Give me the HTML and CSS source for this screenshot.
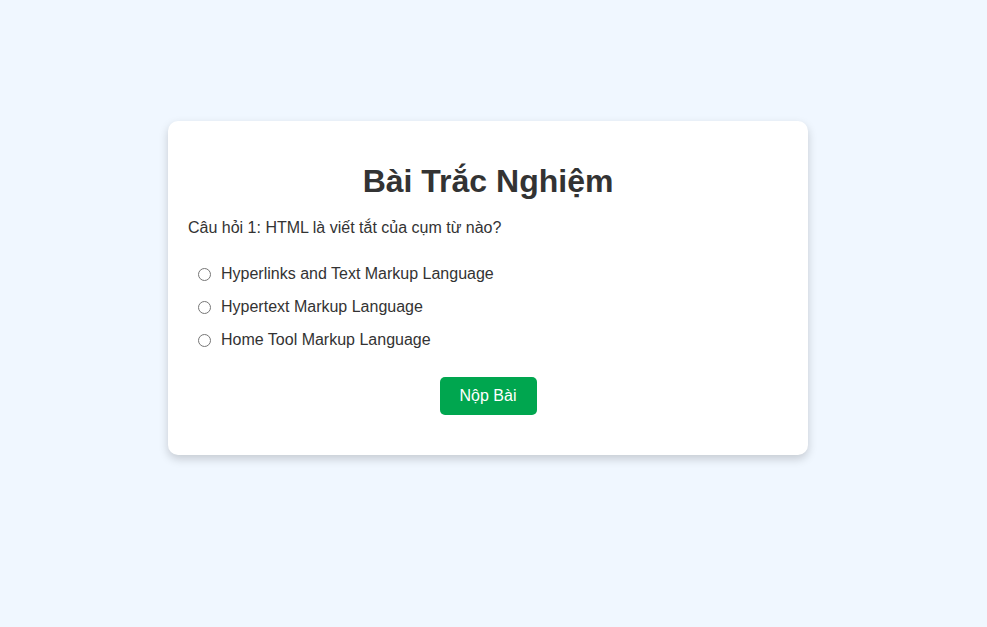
FILE: index.html
```html
<!DOCTYPE html>
<html lang="vi">
<head>
<meta charset="utf-8">
<title>Bài Trắc Nghiệm</title>
<link rel="stylesheet" href="styles.css">
</head>
<body>
<div class="quiz">
  <h1 class="title">Bài Trắc Nghiệm</h1>
  <p class="question">Câu hỏi 1: HTML là viết tắt của cụm từ nào?</p>
  <div class="options">
    <label class="option"><input type="radio" name="q1"> Hyperlinks and Text Markup Language</label>
    <label class="option"><input type="radio" name="q1"> Hypertext Markup Language</label>
    <label class="option"><input type="radio" name="q1"> Home Tool Markup Language</label>
  </div>
  <div class="actions">
    <button class="submit" type="button">Nộp Bài</button>
  </div>
</div>
</body>
</html>
```

FILE: styles.css
```css
html, body {
  margin: 0;
  padding: 0;
}
body {
  background: #f0f7ff;
  font-family: "Liberation Sans", Arial, sans-serif;
  color: #333;
  padding: 121px 11px 0 0;
  min-height: 100vh;
  box-sizing: border-box;
}
.quiz {
  width: 640px;
  box-sizing: border-box;
  margin: 0 auto;
  background: #fff;
  border-radius: 10px;
  box-shadow: 0 4px 10px rgba(0, 0, 0, 0.18);
  padding: 20px 20px 40px;
}
.title {
  text-align: center;
  font-size: 32px;
  font-weight: bold;
  margin: 22px 0 0;
  line-height: 37px;
}
.question {
  font-size: 16px;
  margin: 19px 0 0;
  line-height: 18px;
}
.options {
  display: flex;
  flex-direction: column;
  gap: 5px;
  margin-top: 23px;
}
.option {
  display: flex;
  align-items: center;
  padding: 5px 10px;
  font-size: 16px;
  line-height: 18px;
}
.option input {
  margin: 0 10px 0 0;
  width: 13px;
  height: 13px;
}
.actions {
  display: flex;
  justify-content: center;
  margin-top: 23px;
}
.submit {
  background: #00a64f;
  color: #fff;
  border: none;
  border-radius: 5px;
  padding: 10px 20px;
  font-family: "Liberation Sans", Arial, sans-serif;
  font-size: 16px;
  line-height: 18px;
  width: 97px;
  height: 38px;
}
```
